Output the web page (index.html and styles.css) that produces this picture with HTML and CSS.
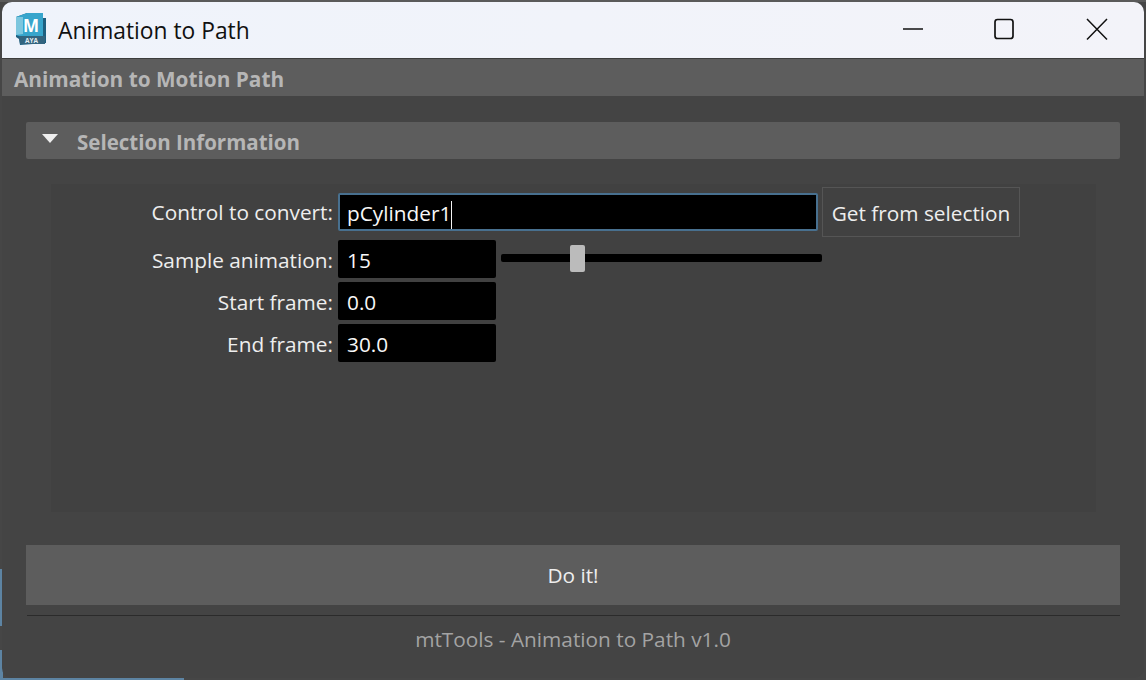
FILE: index.html
```html
<!DOCTYPE html>
<html lang="en">
<head>
<meta charset="utf-8">
<title>Animation to Path</title>
<link rel="stylesheet" href="styles.css">
</head>
<body>
<div class="window">
  <header class="titlebar">
    <svg class="app-icon" width="32" height="34" viewBox="0 0 32 34">
      <path d="M1 5 L12 1 H28 V6 H31 V31 L5 33 L4 27 L1 25 Z" fill="#1d5f80"/>
      <path d="M1 5 L12 1 H28 V24 H4 L1 23 Z" fill="#37a5cc"/>
      <path d="M1 5 L8 5 V22 L1 23 Z" fill="#7cc6de"/>
      <path d="M4 24 H30 V32 H5 Z" fill="#32647f"/>
      <text x="16" y="19.5" class="icon-m">M</text>
      <text x="16.5" y="30.5" class="icon-aya">AYA</text>
    </svg>
    <span class="title">Animation to Path</span>
    <div class="controls">
      <svg class="ctl" width="92" height="56" viewBox="0 0 92 56"><path d="M36 27H56" stroke="#111" stroke-width="1.6" fill="none"/></svg>
      <svg class="ctl" width="92" height="56" viewBox="0 0 92 56"><rect x="36" y="17.5" width="18" height="19" rx="2.5" stroke="#111" stroke-width="1.7" fill="none"/></svg>
      <svg class="ctl" width="92" height="56" viewBox="0 0 92 56"><path d="M36 17L56 37.5M56 17L36 37.5" stroke="#111" stroke-width="1.5" fill="none"/></svg>
    </div>
  </header>
  <div class="heading">Animation to Motion Path</div>
  <main class="content">
    <div class="section-head">
      <svg class="arrow" width="16" height="10" viewBox="0 0 16 10"><path d="M0 0H16L8 9Z" fill="#eeeeee"/></svg>
      <span class="section-title">Selection Information</span>
    </div>
    <div class="panel">
      <div class="row row-first">
        <label class="label">Control to convert:</label>
        <div class="field field-wide focused">pCylinder1<i class="caret"></i></div>
        <div class="push">Get from selection</div>
      </div>
      <div class="row">
        <label class="label">Sample animation:</label>
        <div class="field">15</div>
        <div class="slider"><i class="thumb"></i></div>
      </div>
      <div class="row">
        <label class="label">Start frame:</label>
        <div class="field">0.0</div>
      </div>
      <div class="row">
        <label class="label">End frame:</label>
        <div class="field">30.0</div>
      </div>
    </div>
    <div class="do-it">Do it!</div>
    <div class="rule"></div>
    <div class="footer">mtTools - Animation to Path v1.0</div>
  </main>
</div>
</body>
</html>
```
FILE: styles.css
```css
* { box-sizing: border-box; }
html, body { margin: 0; height: 100%; }
body {
  width: 1146px;
  height: 680px;
  overflow: hidden;
  padding: 2px;
  background:
    linear-gradient(#5d84a3, #5d84a3) 0 100% / 184px 2px no-repeat,
    linear-gradient(#5d84a3, #5d84a3) 0 650px / 3px 30px no-repeat,
    linear-gradient(#5d84a3, #5d84a3) 0 569px / 3px 57px no-repeat,
    linear-gradient(#5a5a5a, #5a5a5a) 0 0 / 100% 2px no-repeat,
    #464646;
  font-family: "Open Sans", "Noto Sans", sans-serif;
  font-size: 20.8px;
  color: #eeeeee;
}
.window {
  height: 676px;
  display: flex;
  flex-direction: column;
  background: #444444;
  border-radius: 10px;
  overflow: hidden;
}
.titlebar {
  flex: none;
  height: 57px;
  display: flex;
  align-items: center;
  padding-left: 13px;
  background: linear-gradient(to right, #eff3fb, #f3f3f9);
  border-bottom: 1px solid #3c3c3c;
}
.app-icon { flex: none; margin-bottom: 2px; }
.icon-m { font: 700 17px "Open Sans", sans-serif; fill: #fff; text-anchor: middle; }
.icon-aya { font: 700 6.5px "Open Sans", sans-serif; fill: #e6eef2; text-anchor: middle; }
.title { margin-left: 11px; font-size: 22.8px; color: #111; }
.controls { margin-left: auto; margin-right: 1px; display: flex; }
.ctl { display: block; }
.heading {
  flex: none;
  height: 37px;
  line-height: 40px;
  padding-left: 12px;
  background: #5d5d5d;
  font-weight: 700;
  color: #b6b6b6;
}
.content {
  flex: 1;
  display: flex;
  flex-direction: column;
  padding: 26px 24px 0;
}
.section-head {
  height: 37px;
  display: flex;
  align-items: center;
  padding-left: 16px;
  background: #5d5d5d;
  border-radius: 2px;
  font-size: 20.5px;
  font-weight: 700;
  color: #b6b6b6;
}
.section-title { padding-top: 3px; }
.arrow { margin-right: 19px; margin-bottom: 4px; }
.panel {
  height: 328px;
  margin: 25px 24px 0 25px;
  padding: 3px 0 0;
  background: #414141;
}
.row {
  display: flex;
  align-items: flex-start;
  margin-top: 4px;
  height: 38px;
}
.row-first { margin-top: 0; height: 50px; align-items: center; margin-bottom: -1px; }
.label {
  flex: none;
  width: 282px;
  margin-right: 5px;
  text-align: right;
  line-height: 41px;
  white-space: nowrap;
  color: #eeeeee;
}
.field {
  flex: none;
  width: 158px;
  height: 38px;
  line-height: 40px;
  padding-left: 9px;
  background: #000;
  border-radius: 2px;
  color: #f8f8f8;
}
.field-wide { width: 480px; }
.focused { border: 2px solid #48708f; line-height: 37px; padding-left: 7px; }
.caret {
  display: inline-block;
  width: 1px;
  height: 28px;
  margin-left: 0;
  vertical-align: middle;
  background: #f4f4f4;
}
.push {
  flex: none;
  width: 198px;
  height: 50px;
  margin-left: 4px;
  border: 1px solid #555555;
  line-height: 50px;
  text-align: center;
  color: #eeeeee;
}
.slider {
  position: relative;
  flex: none;
  width: 321px;
  height: 8px;
  margin: 14px 0 0 5px;
  background: #000;
  border-radius: 2px;
}
.thumb {
  position: absolute;
  left: 69px;
  top: -9px;
  width: 15px;
  height: 27px;
  background: #bbbbbb;
  border-radius: 2px;
}
.do-it {
  height: 60px;
  margin-top: 33px;
  line-height: 61px;
  text-align: center;
  background: #5d5d5d;
  color: #eeeeee;
}
.rule { height: 1px; margin: 10px 0 0 1px; background: #2b2b2b; }
.footer {
  margin-top: 9px;
  line-height: 28px;
  text-align: center;
  color: #a3a3a3;
}
```
